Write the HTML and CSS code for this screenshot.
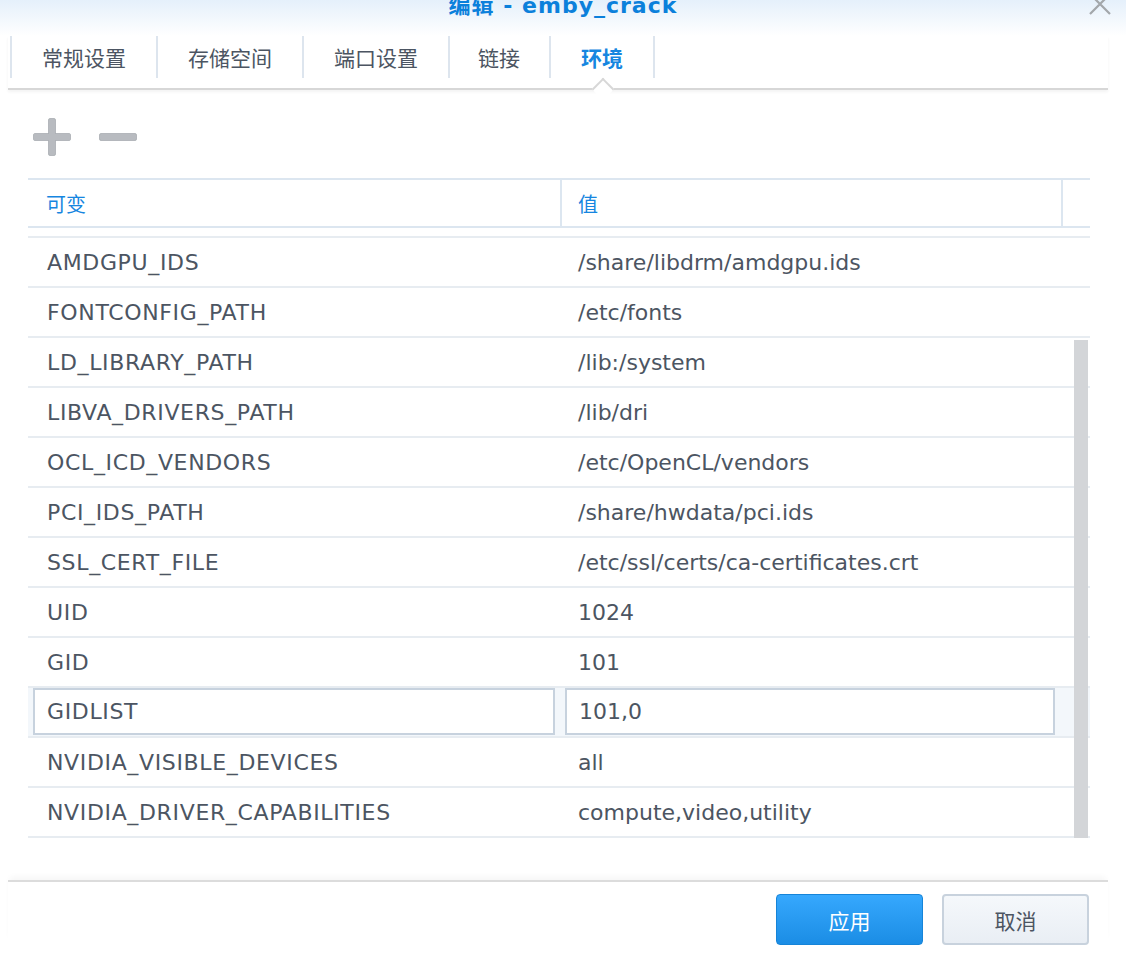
FILE: index.html
```html
<!DOCTYPE html>
<html lang="zh">
<head>
<meta charset="utf-8">
<title>编辑 - emby_crack</title>
<link rel="stylesheet" href="styles.css">
</head>
<body>
<div class="dialog">
  <header class="titlebar">
    <h1 class="title">编辑 - emby_crack</h1>
    <svg class="close" width="24" height="24" viewBox="0 0 24 24"><path d="M2 2 L22 22 M22 2 L2 22" stroke="#a3a7ab" stroke-width="2.2" fill="none"/></svg>
  </header>

  <nav class="tabs">
    <div class="tab">常规设置</div>
    <div class="tab">存储空间</div>
    <div class="tab">端口设置</div>
    <div class="tab short">链接</div>
    <div class="tab active">环境</div>
  </nav>

  <div class="toolbar">
    <svg class="tool" width="38" height="38" viewBox="0 0 38 38"><rect x="0.5" y="15.5" width="37" height="7" rx="1.5" class="ico"/><rect x="15.5" y="0.5" width="7" height="37" rx="1.5" class="ico"/><rect x="1" y="16" width="36" height="6" rx="1" class="ico-fill"/></svg>
    <svg class="tool" width="38" height="38" viewBox="0 0 38 38"><rect x="0.5" y="15.5" width="37" height="7" rx="1.5" class="ico"/></svg>
  </div>

  <div class="grid">
    <div class="grid-head">
      <div class="hcell c1">可变</div>
      <div class="hcell c2">值</div>
      <div class="hcell c3"></div>
    </div>
    <div class="grid-body">
      <div class="row"><div class="cell">AMDGPU_IDS</div><div class="cell">/share/libdrm/amdgpu.ids</div></div>
      <div class="row"><div class="cell">FONTCONFIG_PATH</div><div class="cell">/etc/fonts</div></div>
      <div class="row"><div class="cell">LD_LIBRARY_PATH</div><div class="cell">/lib:/system</div></div>
      <div class="row"><div class="cell">LIBVA_DRIVERS_PATH</div><div class="cell">/lib/dri</div></div>
      <div class="row"><div class="cell">OCL_ICD_VENDORS</div><div class="cell">/etc/OpenCL/vendors</div></div>
      <div class="row"><div class="cell">PCI_IDS_PATH</div><div class="cell">/share/hwdata/pci.ids</div></div>
      <div class="row"><div class="cell">SSL_CERT_FILE</div><div class="cell">/etc/ssl/certs/ca-certificates.crt</div></div>
      <div class="row"><div class="cell">UID</div><div class="cell">1024</div></div>
      <div class="row"><div class="cell">GID</div><div class="cell">101</div></div>
      <div class="row editing">
        <div class="cell"><div class="input">GIDLIST</div></div>
        <div class="cell"><div class="input">101,0</div></div>
      </div>
      <div class="row"><div class="cell">NVIDIA_VISIBLE_DEVICES</div><div class="cell">all</div></div>
      <div class="row"><div class="cell">NVIDIA_DRIVER_CAPABILITIES</div><div class="cell">compute,video,utility</div></div>
      <div class="scroll-thumb"></div>
    </div>
  </div>

  <footer class="footer">
    <button class="btn primary">应用</button>
    <button class="btn">取消</button>
  </footer>
</div>
</body>
</html>
```

FILE: styles.css
```css
* { box-sizing: border-box; }
html, body { margin: 0; padding: 0; background: #fff; }
body {
  font-family: "DejaVu Sans", "Noto Sans CJK SC", sans-serif;
  color: #4c5562;
  width: 1126px;
  height: 956px;
  overflow: hidden;
}
.dialog { position: relative; display: flex; flex-direction: column; }

.titlebar {
  height: 36px;
  background: linear-gradient(#e5f0fb 0%, #f3f8fd 55%, #ffffff 100%);
  display: flex;
  justify-content: center;
  position: relative;
}
.title {
  margin: -6px 0 0 0;
  font-size: 22px;
  line-height: 24px;
  font-weight: bold;
  color: #0b80db;
  font-family: "DejaVu Sans", "Noto Sans CJK SC", sans-serif;
  letter-spacing: 1px;
}
.close { position: absolute; top: -8px; left: 1088px; }

.tabs {
  display: flex;
  margin: 0 18px 0 8px;
  padding-left: 2px;
  border-bottom: 2px solid #d7d7d7;
  box-shadow: 0 2px 3px rgba(0,0,0,0.05);
  position: relative;
}
.tab {
  height: 42px;
  margin-bottom: 10px;
  padding: 0 30px;
  border-left: 2px solid #dde5ee;
  display: flex;
  align-items: center;
  font-family: "Noto Sans CJK SC", sans-serif;
  font-size: 21px;
  color: #4c5562;
  position: relative;
}
.tab.short { padding: 0 29px 0 28px; }
.tab.active { color: #1686e0; font-weight: bold; border-right: 2px solid #dde5ee; padding: 0 30px 0 30px; }
.tab.active::after {
  content: "";
  position: absolute;
  left: 50%;
  bottom: -19px;
  width: 14px;
  height: 14px;
  margin-left: -7px;
  background: #fff;
  border-top: 2px solid #d7d7d7;
  border-left: 2px solid #d7d7d7;
  transform: rotate(45deg);
}

.toolbar {
  height: 88px;
  display: flex;
  align-items: center;
  gap: 28px;
  padding: 5px 0 0 33px;
}
.ico { fill: #b8bbc0; stroke: #a9adb3; stroke-width: 0.8; }
.ico-fill { fill: #b8bbc0; }

.grid { margin-left: 28px; width: 1062px; }
.grid-head {
  display: flex;
  border-top: 2px solid #dce6f0;
  border-bottom: 2px solid #dce6f0;
  height: 50px;
}
.hcell {
  font-family: "Noto Sans CJK SC", sans-serif;
  font-size: 20px;
  color: #1686e0;
  display: flex;
  align-items: center;
}
.hcell.c1 { width: 532px; padding-left: 18px; }
.hcell.c2 { width: 501px; padding-left: 16px; border-left: 2px solid #dce6f0; }
.hcell.c3 { flex: 1; border-left: 2px solid #dce6f0; }

.grid-body {
  margin-top: 8px;
  border-top: 2px solid #e7ecf1;
  position: relative;
}
.row {
  display: grid;
  grid-template-columns: 532px 501px 1fr;
  height: 50px;
  border-bottom: 2px solid #e7ecf1;
}
.cell {
  display: flex;
  align-items: center;
  font-size: 22px;
  white-space: nowrap;
}
.row .cell:first-child { padding-left: 19px; letter-spacing: 0.65px; }
.row .cell:nth-child(2) { padding-left: 18px; }

.row.editing { background: #f3f7fb; }
.row.editing .cell { padding: 0 5px 1px 5px; align-items: stretch; }
.row.editing .cell:nth-child(2) { padding: 0 6px 1px 5px; }
.input {
  flex: 1;
  background: #fff;
  border: 2px solid #c7d2de;
  display: flex;
  align-items: center;
  padding-left: 12px;
}

.scroll-thumb {
  position: absolute;
  right: 2px;
  top: 102px;
  bottom: 0;
  width: 14px;
  background: #d3d5d8;
}

.footer {
  margin: 42px 18px 0 8px;
  border-top: 2px solid #dcdcdc;
  box-shadow: 0 -5px 6px -2px rgba(0,0,0,0.04);
  padding: 12px 19px 0 0;
  display: flex;
  justify-content: flex-end;
  gap: 19px;
}
.btn {
  width: 147px;
  height: 51px;
  border-radius: 4px;
  font-family: "Noto Sans CJK SC", sans-serif;
  font-size: 21px;
  color: #4c5562;
  border: 2px solid #c8d2dd;
  background: linear-gradient(#f5f8fb, #e9eef4);
  padding: 0;
}
.btn.primary {
  color: #fff;
  border: 1px solid #1684d8;
  background: linear-gradient(#36a8fd, #1b8de5);
}
```
